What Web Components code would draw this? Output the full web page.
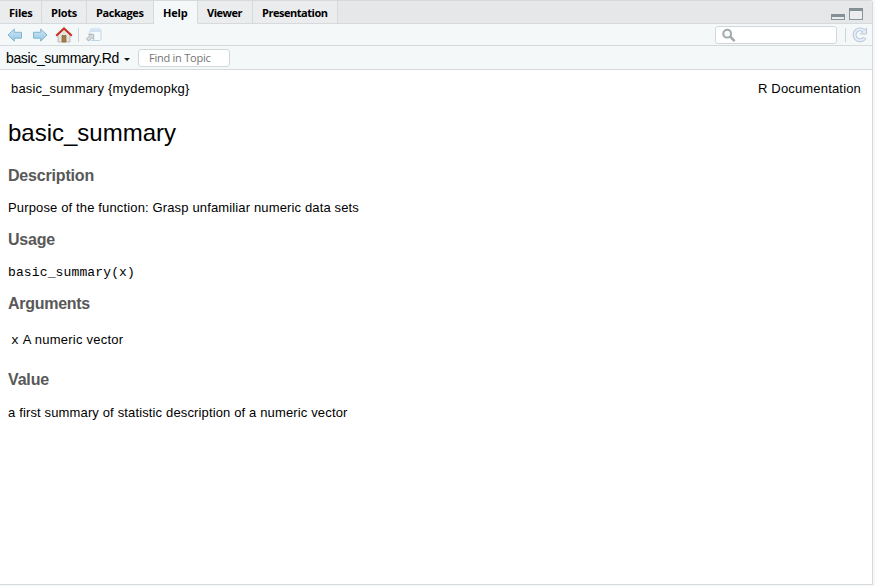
<!DOCTYPE html>
<html lang="en">
<head>
<meta charset="utf-8">
<title>Help</title>
<style>
html,body{margin:0;height:100%;overflow:hidden;background:#f4f8f9}
body{font-family:"Liberation Sans",Arial,sans-serif;color:#000}
</style>
</head>
<body>
<help-pane></help-pane>
<script>
function define(name, html, setup) {
  const tpl = document.createElement('template');
  tpl.innerHTML = html;
  customElements.define(name, class extends HTMLElement {
    constructor() {
      super();
      this.attachShadow({mode: 'open'}).append(tpl.content.cloneNode(true));
    }
    connectedCallback() { if (setup) setup(this); }
  });
}

// A single line of text, tracked so that it fills the width in its "w" attribute.
define('fit-text', `<style>:host{display:inline-block;white-space:pre}span{display:inline-block}</style><span><slot></slot></span>`, el => {
  const span = el.shadowRoot.querySelector('span');
  const want = parseFloat(el.getAttribute('w'));
  const natural = span.getBoundingClientRect().width;
  if (want && natural) {
    span.style.letterSpacing = ((want - natural) / el.textContent.length) + 'px';
    el.style.width = want + 'px';
  }
});

define('pane-tab', `<style>
:host{display:block;box-sizing:border-box;flex:none;height:23px;border-right:1px solid #d6dadc;border-bottom:1px solid #d6dadc;background:#ebecee;padding-left:9px;font:bold 11px/24px "Open Sans","Noto Sans",sans-serif}
:host([selected]){background:#f4f8f9;border-bottom-color:#f4f8f9}
</style><slot></slot>`);

define('pane-icon', `<style>:host{display:block;flex:none}svg{display:block}</style><svg></svg>`, el => {
  const art = {
    back: [16,14,'<path d="M1 7 7.3 1v3.3h7.2v5.9H7.3V13.2Z" fill="url(#g)" stroke="#85b4d0"/>'],
    forward: [16,14,'<path d="M15 7 8.7 1v3.3H1.5v5.9h7.2V13.2Z" fill="url(#g)" stroke="#85b4d0"/>'],
    home: [18,16,'<path d="M3 8 9 2l6 6v7H3Z" fill="#e4e5e3" stroke="#b9bbb9"/><path d="M7 8.5h4V15H7Z" fill="#a97c43" stroke="#8b6434" stroke-width=".7"/><path d="M1.2 8.7 9 1.4l7.8 7.3" fill="none" stroke="#c9301f" stroke-width="2"/>'],
    popout: [17,14,'<rect x="5" y="1" width="11" height="11.5" rx="1.8" fill="#f5fafd" stroke="#bdd5e7"/><path d="M5.5 2h10v2h-10Z" fill="#cfe3f3"/><path d="M3.5 6.3h5.2v5.2L7 9.8l-3.4 3.3-2.2-2.2 3.4-3.3Z" fill="#d5dadd" stroke="#a9b2b8" stroke-width=".9"/>'],
    min: [14,6,'<rect x=".5" y=".5" width="13" height="5" fill="#e9ebec" stroke="#88939a"/><path d="M0 0h14v3H0Z" fill="#848f96"/>'],
    max: [14,12,'<rect x=".5" y=".5" width="13" height="11" fill="#ebedee" stroke="#88939a"/><path d="M0 0h14v3H0Z" fill="#848f96"/>'],
    search: [14,14,'<circle cx="5.2" cy="5.7" r="3.9" fill="#f8f9f9" stroke="#a0a9ad" stroke-width="2"/><path d="m8.4 8.9 3.5 3.5" stroke="#a0a9ad" stroke-width="2.6" stroke-linecap="round"/>'],
    refresh: [16,16,'<path d="M11.6 3.6A5.5 5.5 0 1 0 12.8 10.6" fill="none" stroke="#b6c3d4" stroke-width="3.8"/><path d="M14.5 1v6H8.5Z" fill="#e5edfb" stroke="#b6c3d4" stroke-width=".9"/><path d="M12 4A5.5 5.5 0 1 0 12.5 11.1" fill="none" stroke="#e5edfb" stroke-width="2.1"/>']
  }[el.getAttribute('name')];
  const svg = el.shadowRoot.querySelector('svg');
  svg.setAttribute('width', art[0]);
  svg.setAttribute('height', art[1]);
  svg.innerHTML = '<defs><linearGradient id="g" x2="0" y2="1"><stop stop-color="#cfe8f5"/><stop offset="1" stop-color="#94c8e5"/></linearGradient></defs>' + art[2];
});

define('pane-tabs', `<style>
:host{display:flex;height:23px;box-sizing:border-box;background:#e5e7e9}
.rest{flex:1;border-bottom:1px solid #d6dadc;display:flex;justify-content:flex-end;align-items:flex-start;gap:4px;padding-right:9px}
.rest pane-icon:first-child{margin-top:13px}.rest pane-icon{margin-top:7px}
</style>
<pane-tab style="width:42px"><fit-text w="23.5">Files</fit-text></pane-tab>
<pane-tab style="width:45px"><fit-text w="26">Plots</fit-text></pane-tab>
<pane-tab style="width:67px"><fit-text w="47.5">Packages</fit-text></pane-tab>
<pane-tab style="width:44px" selected><fit-text w="24.5">Help</fit-text></pane-tab>
<pane-tab style="width:55px"><fit-text w="35">Viewer</fit-text></pane-tab>
<pane-tab style="width:85px"><fit-text w="65.5">Presentation</fit-text></pane-tab>
<div class="rest"><pane-icon name="min"></pane-icon><pane-icon name="max"></pane-icon></div>`);

define('field-box', `<style>:host{display:flex;box-sizing:border-box;align-items:center;border:1px solid #d2d7da;border-radius:3px;background:#fff;height:18px;flex:none}</style><slot></slot>`);

define('pane-toolbar', `<style>
:host{display:flex;box-sizing:border-box;height:22px;background:#f4f8f9;border-bottom:1px solid #d6dadc;align-items:center;padding:0 4px 0 7px}
i{width:1px;height:14px;background:#cfd5d8}
</style>
<pane-icon name="back"></pane-icon><pane-icon name="forward" style="margin-left:9px"></pane-icon>
<pane-icon name="home" style="margin-left:7px"></pane-icon><i style="margin:0 6px 0 5px"></i><pane-icon name="popout"></pane-icon>
<field-box style="width:122px;margin-left:auto;padding-left:6px"><pane-icon name="search"></pane-icon></field-box>
<i style="margin:0 6px 0 8px"></i><pane-icon name="refresh"></pane-icon>`);

define('topic-bar', `<style>
:host{display:flex;box-sizing:border-box;height:24px;background:#f4f8f9;border-bottom:1px solid #d6dadc;align-items:center;padding-left:6px;font-size:14px}
b{border:3px solid transparent;border-top-color:#111;border-bottom:0;margin:3px 8px 0 5px}
field-box{font:11px/16px "Open Sans","Noto Sans",sans-serif;color:#757575}
</style>
<fit-text w="113" style="line-height:16px;padding-top:1px">basic_summary.Rd</fit-text><b></b>
<field-box style="width:92px;padding-left:10px"><fit-text w="61.5">Find in Topic</fit-text></field-box>`);

define('topic-page', `<style>
:host{display:block;flex:1;background:#fff;padding:10px 8px 0;font-size:13px;line-height:18px}
header{display:flex;justify-content:space-between;padding:0 3px}
h2{font-weight:400;font-size:24px;line-height:28px;margin:21px 0 0}
h3{font-size:16px;line-height:18px;color:#585858;margin:0}
code{font-family:"Liberation Mono","Courier New",monospace;font-size:13px}
section{height:64px}section p{margin:14px 0 0}
h2+section{margin-top:20px}
fit-text{display:block}
</style>
<header><fit-text w="178.5">basic_summary {mydemopkg}</fit-text><fit-text w="103">R Documentation</fit-text></header>
<h2><fit-text w="168">basic_summary</fit-text></h2>
<section><h3><fit-text w="86">Description</fit-text></h3><p><fit-text w="351">Purpose of the function: Grasp unfamiliar numeric data sets</fit-text></p></section>
<section><h3><fit-text w="47">Usage</fit-text></h3><p style="margin-top:15px"><code><fit-text w="127">basic_summary(x)</fit-text></code></p></section>
<section style="height:76px"><h3><fit-text w="82">Arguments</fit-text></h3><p style="display:flex;margin-top:18px;padding-left:3px;gap:4px"><code style="padding-top:1px">x</code><fit-text w="100.5">A numeric vector</fit-text></p></section>
<section><h3><fit-text w="41">Value</fit-text></h3><p style="margin-top:15px"><fit-text w="339.5">a first summary of statistic description of a numeric vector</fit-text></p></section>`);

define('help-pane', `<style>
:host{display:flex;flex-direction:column;box-sizing:border-box;width:873px;height:585px;border:solid #d6dadc;border-width:1px 1px 1px 0;border-top-right-radius:3px;overflow:hidden}
</style><pane-tabs></pane-tabs><pane-toolbar></pane-toolbar><topic-bar></topic-bar><topic-page></topic-page>`);
</script>
</body>
</html>
